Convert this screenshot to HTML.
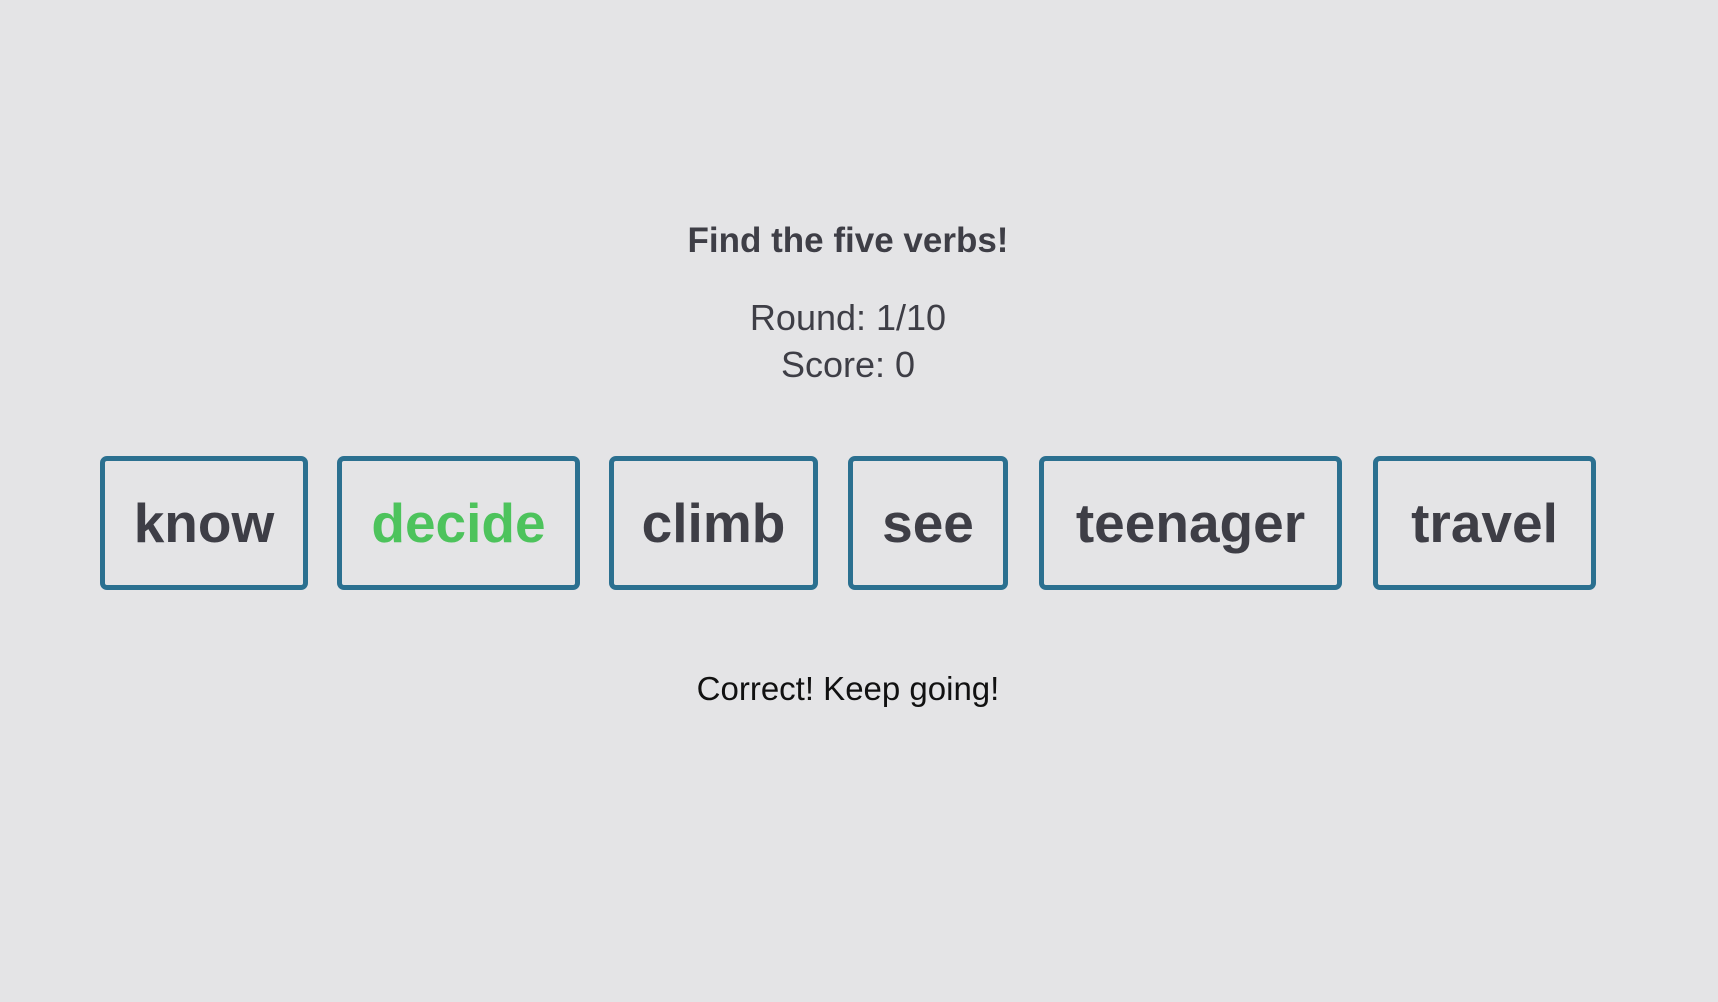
<!DOCTYPE html>
<html><head><meta charset="utf-8"><style>
html,body{margin:0;padding:0;background:#e4e4e6;width:1718px;height:1002px;overflow:hidden;font-family:"Liberation Sans",sans-serif;color:#3e3e46}
.c{position:absolute;left:0;width:1696px;text-align:center}
.t{top:219px;font-size:35px;font-weight:bold;line-height:44px}
.r{top:294px;font-size:36px;line-height:47px}
.f{top:669px;font-size:33px;line-height:40px;color:#111}
.b{position:absolute;top:456px;height:124px;border:5px solid #2b7090;border-radius:7px;box-sizing:content-box;display:flex;align-items:center;justify-content:center;font-size:55px;font-weight:bold;color:#3e3e46}
</style></head><body>
<div class="c t">Find the five verbs!</div>
<div class="c r">Round: 1/10<br>Score: 0</div>
<div class="b" style="left:100px;width:198px">know</div>
<div class="b" style="left:337px;width:233px;color:#4dc35c">decide</div>
<div class="b" style="left:609px;width:199px">climb</div>
<div class="b" style="left:848px;width:150px">see</div>
<div class="b" style="left:1039px;width:293px">teenager</div>
<div class="b" style="left:1373px;width:213px">travel</div>
<div class="c f">Correct! Keep going!</div>
</body></html>
